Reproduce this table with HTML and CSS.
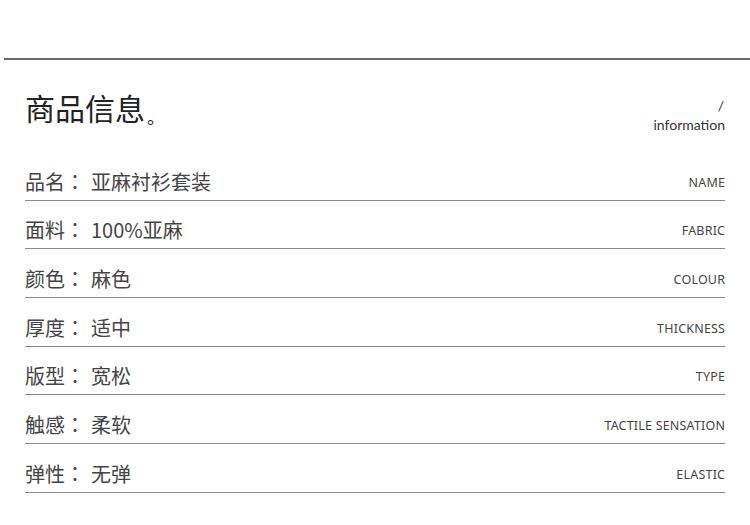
FILE: index.html
```html
<!DOCTYPE html>
<html lang="zh-CN">
<head>
<meta charset="utf-8">
<link rel="stylesheet" href="styles.css">
</head>
<body>
<div class="top-rule"></div>
<div class="header">
  <div class="title">商品信息<span class="dot">。</span></div>
  <div class="sub">
    <div class="slash">/</div>
    <div class="info">information</div>
  </div>
</div>
<div class="rows">
  <div class="row"><div class="cn"><span class="k">品名<span class="colon" lang="zh-TW">：</span></span><span class="v">亚麻衬衫套装</span></div><div class="en">NAME</div></div>
  <div class="row"><div class="cn"><span class="k">面料<span class="colon" lang="zh-TW">：</span></span><span class="v">100%亚麻</span></div><div class="en">FABRIC</div></div>
  <div class="row"><div class="cn"><span class="k">颜色<span class="colon" lang="zh-TW">：</span></span><span class="v">麻色</span></div><div class="en">COLOUR</div></div>
  <div class="row"><div class="cn"><span class="k">厚度<span class="colon" lang="zh-TW">：</span></span><span class="v">适中</span></div><div class="en">THICKNESS</div></div>
  <div class="row"><div class="cn"><span class="k">版型<span class="colon" lang="zh-TW">：</span></span><span class="v">宽松</span></div><div class="en">TYPE</div></div>
  <div class="row"><div class="cn"><span class="k">触感<span class="colon" lang="zh-TW">：</span></span><span class="v">柔软</span></div><div class="en">TACTILE SENSATION</div></div>
  <div class="row"><div class="cn"><span class="k">弹性<span class="colon" lang="zh-TW">：</span></span><span class="v">无弹</span></div><div class="en">ELASTIC</div></div>
</div>
</body>
</html>
```
FILE: styles.css
```css
html, body {
  margin: 0;
  padding: 0;
  background: #ffffff;
}
body {
  width: 750px;
  height: 525px;
  overflow: hidden;
  font-family: "Noto Sans CJK SC", "Noto Sans", sans-serif;
  color: #444;
}
.top-rule {
  margin-top: 58px;
  margin-left: 4px;
  height: 2px;
  background: #6c6c6c;
}
.header {
  height: 92px;
  box-sizing: border-box;
  padding: 0 25px;
  display: flex;
  justify-content: space-between;
  align-items: flex-start;
}
.title {
  margin-top: 30px;
  font-size: 30px;
  line-height: 34px;
  font-weight: 400;
  color: #222;
  display: flex;
  align-items: flex-end;
}
.title .dot {
  font-size: 18px;
  line-height: 20px;
  margin-bottom: -2px;
  margin-left: 2px;
}
.sub {
  margin-top: 38px;
  text-align: right;
  font-family: "Lato", "Open Sans", sans-serif;
  color: #333;
  font-size: 14px;
}
.slash {
  line-height: 16px;
  padding-right: 1px;
}
.info {
  line-height: 18px;
  margin-top: 2px;
}
.rows {
  padding: 0 25px;
}
.row {
  height: 48.67px;
  box-sizing: border-box;
  padding-top: 12px;
  border-bottom: 1px solid #8a8a8a;
  display: flex;
  justify-content: space-between;
  align-items: center;
}
.cn {
  font-size: 20px;
  line-height: 28px;
  color: #444;
  display: flex;
}
.cn .k {
  width: 66px;
}
.cn .colon {
  font-family: "Noto Sans CJK TC", "Noto Sans CJK SC", sans-serif;
}
.en {
  font-family: "Noto Sans", sans-serif;
  font-size: 12.5px;
  line-height: 16px;
  color: #444;
  letter-spacing: 0.2px;
  margin-right: -0.2px;
  margin-top: 2px;
}
```
